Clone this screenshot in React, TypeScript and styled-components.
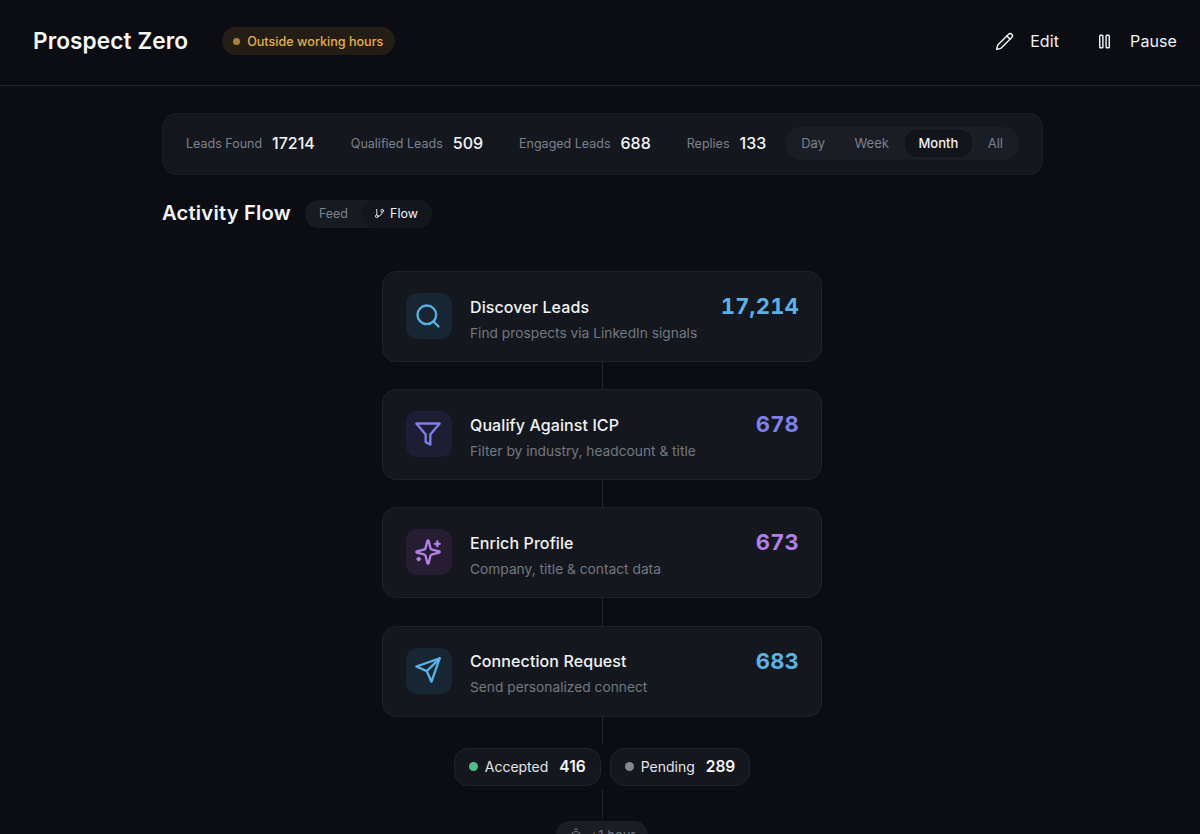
import React from 'react';
import styled, { createGlobalStyle } from 'styled-components';
import { GitBranch, Pencil, Search, Timer } from 'lucide-react';

const DISPLAY = `'Inter', 'Liberation Sans', sans-serif`;

const GlobalStyle = createGlobalStyle`
  html, body {
    margin: 0;
    padding: 0;
    height: 834px;
    overflow: hidden;
    background-color: #0b0d12;
    font-family: 'Inter', 'Liberation Sans', sans-serif;
  }
  * {
    box-sizing: border-box;
  }
`;

const Page = styled.div`
  width: 1200px;
  height: 834px;
  overflow: hidden;
  color: #f4f5f7;
`;

const Header = styled.header`
  display: flex;
  align-items: center;
  justify-content: space-between;
  height: 86px;
  padding: 0 23px 3px 33px;
  border-bottom: 1px solid #20232a;
`;

const HeaderLeft = styled.div`
  display: flex;
  align-items: center;
  gap: 34px;
`;

const Logo = styled.h1`
  margin: -2px 0 0;
  font-family: ${DISPLAY};
  font-size: 22.6px;
  font-weight: 600;
  letter-spacing: 0.1px;
  color: #f6f7f8;
`;

const StatusBadge = styled.div`
  display: flex;
  align-items: center;
  gap: 7px;
  height: 28px;
  padding: 0 12px 0 11px;
  border-radius: 14px;
  background-color: #231d15;
  color: #e3b04f;
  font-size: 12.6px;
  font-weight: 500;
`;

const Dot = styled.span<{ $color: string; $size: number }>`
  width: ${(p) => p.$size}px;
  height: ${(p) => p.$size}px;
  flex: none;
  border-radius: 50%;
  background-color: ${(p) => p.$color};
`;

const HeaderActions = styled.div`
  display: flex;
  align-items: center;
  gap: 36px;
`;

const HeaderButton = styled.button<{ $gap: number }>`
  display: flex;
  align-items: center;
  gap: ${(p) => p.$gap}px;
  padding: 0;
  border: none;
  background: none;
  color: #f1f2f4;
  font-family: inherit;
  font-size: 16px;
  font-weight: 400;
  letter-spacing: 0.1px;
`;

const Main = styled.main`
  width: 881px;
  margin-left: 162px;
  padding-top: 27px;
`;

const StatsBar = styled.section`
  display: flex;
  align-items: center;
  justify-content: space-between;
  height: 62px;
  padding: 0 23px 2px;
  border: 1px solid #1b1e25;
  border-radius: 14px;
  background-color: #14181e;
`;

const Stats = styled.div`
  display: flex;
  align-items: center;
  gap: 36px;
`;

const Stat = styled.div`
  display: flex;
  align-items: center;
  gap: 10px;
`;

const StatLabel = styled.span`
  color: #7d818c;
  font-size: 12.5px;
`;

const StatValue = styled.span`
  font-family: ${DISPLAY};
  font-size: 16px;
  font-weight: 500;
  color: #f4f5f7;
`;

const Segments = styled.div`
  display: flex;
  align-items: center;
  gap: 2.5px;
  height: 33px;
  padding: 0 2.5px;
  border-radius: 16px;
  background-color: #1a1d24;
`;

const Segment = styled.span<{ $active?: boolean }>`
  display: flex;
  align-items: center;
  height: 27px;
  padding: 0 13.5px;
  border-radius: 12px;
  background-color: ${(p) => (p.$active ? '#11141a' : 'transparent')};
  color: ${(p) => (p.$active ? '#f1f2f4' : '#7d818c')};
  font-size: 13px;
  font-weight: ${(p) => (p.$active ? 450 : 400)};
`;

const TitleRow = styled.div`
  display: flex;
  align-items: center;
  gap: 14px;
  margin-top: 25px;
`;

const Title = styled.h2`
  margin: -4px 0 0;
  font-family: ${DISPLAY};
  font-size: 20.2px;
  font-weight: 600;
  letter-spacing: 0.2px;
  color: #f4f5f7;
`;

const ViewSwitch = styled.div`
  display: flex;
  align-items: stretch;
  height: 28px;
  border-radius: 14px;
  background-color: #171a21;
  font-size: 12.5px;
`;

const ViewOption = styled.span<{ $active?: boolean }>`
  display: flex;
  align-items: center;
  gap: 5px;
  padding: 0 14px 2px ${(p) => (p.$active ? 12 : 14)}px;
  border-radius: 14px;
  background-color: ${(p) => (p.$active ? '#13161c' : 'transparent')};
  color: ${(p) => (p.$active ? '#f1f2f4' : '#7d818c')};
`;

const Flow = styled.section`
  display: flex;
  flex-direction: column;
  align-items: center;
  margin-top: 43px;
  padding-right: 1px;
`;

const Card = styled.article`
  display: flex;
  align-items: center;
  width: 440px;
  height: 91px;
  padding: 0 22px 0 23px;
  border: 1px solid #1f2229;
  border-radius: 14px;
  background-color: #14181e;
`;

const IconBox = styled.div<{ $bg: string; $color: string }>`
  display: flex;
  align-items: center;
  justify-content: center;
  width: 46px;
  height: 46px;
  flex: none;
  margin-bottom: 1px;
  padding: 0 2px 1px 0;
  border-radius: 12px;
  background-color: ${(p) => p.$bg};
  color: ${(p) => p.$color};
`;

const CardText = styled.div`
  display: flex;
  flex: 1;
  flex-direction: column;
  gap: 8px;
  margin: 6px 0 0 18px;
`;

const CardTitle = styled.span`
  font-size: 16px;
  font-weight: 450;
  line-height: 19px;
  letter-spacing: 0.1px;
  color: #f1f2f4;
`;

const CardDescription = styled.span`
  font-size: 13.75px;
  line-height: 17px;
  color: #73777f;
`;

const CardValue = styled.span<{ $color: string }>`
  align-self: flex-start;
  margin-top: 21px;
  font-family: ${DISPLAY};
  font-size: 22px;
  font-weight: 700;
  line-height: 26px;
  letter-spacing: 0.2px;
  font-variant-numeric: tabular-nums;
  color: ${(p) => p.$color};
`;

const Connector = styled.div<{ $height: number; $after?: number }>`
  width: 1px;
  height: ${(p) => p.$height}px;
  flex: none;
  margin-bottom: ${(p) => p.$after ?? 0}px;
  background-color: #23262d;
`;

const PillRow = styled.div`
  display: flex;
  gap: 9px;
  margin-bottom: 4px;
`;

const Pill = styled.div`
  display: flex;
  align-items: center;
  height: 38px;
  padding: 0 14px;
  border: 1px solid #1f2229;
  border-radius: 14px;
  background-color: #14181e;
`;

const PillLabel = styled.span`
  margin-left: 7px;
  font-size: 14px;
  color: #e4e5e8;
`;

const PillValue = styled.span`
  margin-left: 11px;
  font-family: ${DISPLAY};
  font-size: 15.5px;
  font-weight: 600;
  color: #f4f5f7;
`;

const DelayBadge = styled.div`
  display: flex;
  align-items: center;
  gap: 7px;
  height: 28px;
  padding: 0 13px;
  border-radius: 14px;
  background-color: #1a1d24;
  color: #73777f;
  font-size: 13px;
`;

const stats = [
  { label: 'Leads Found', value: '17214' },
  { label: 'Qualified Leads', value: '509' },
  { label: 'Engaged Leads', value: '688' },
  { label: 'Replies', value: '133' },
];

const Glyph: React.FC<{ size?: number; width?: number; children: React.ReactNode }> = ({ size = 28, width = 2, children }) => (
  <svg width={size} height={size} viewBox='0 0 24 24' fill='none' stroke='currentColor' strokeWidth={width} strokeLinejoin='round' strokeLinecap='round'>
    {children}
  </svg>
);

const FunnelIcon = () => (
  <Glyph>
    <polygon points='22 3 2 3 10 12.46 10 19 14 21 14 12.46 22 3' />
  </Glyph>
);

const SparkleIcon = () => (
  <Glyph>
    <path d='M9.937 15.5A2 2 0 0 0 8.5 14.063l-6.135-1.582a.5.5 0 0 1 0-.962L8.5 9.936A2 2 0 0 0 9.937 8.5l1.582-6.135a.5.5 0 0 1 .963 0L14.063 8.5A2 2 0 0 0 15.5 9.937l6.135 1.581a.5.5 0 0 1 0 .964L15.5 14.063a2 2 0 0 0-1.437 1.437l-1.582 6.135a.5.5 0 0 1-.963 0z' />
    <path d='M20 3v4' />
    <path d='M22 5h-4' />
    <path d='M4 17v2' />
    <path d='M5 18H3' />
  </Glyph>
);

const SendIcon = () => (
  <Glyph>
    <path d='m22 2-7 20-4-9-9-4Z' />
    <path d='M22 2 11 13' />
  </Glyph>
);

const PauseIcon = () => (
  <Glyph size={19} width={1.8}>
    <rect x='6' y='4' width='4' height='16' rx='1' />
    <rect x='14' y='4' width='4' height='16' rx='1' />
  </Glyph>
);

const steps = [
  {
    title: 'Discover Leads',
    description: 'Find prospects via LinkedIn signals',
    value: '17,214',
    color: '#5bb0e6',
    bg: '#182633',
    icon: <Search size={28} strokeWidth={2} />,
  },
  {
    title: 'Qualify Against ICP',
    description: 'Filter by industry, headcount & title',
    value: '678',
    color: '#7f80e8',
    bg: '#1d1e33',
    icon: <FunnelIcon />,
  },
  {
    title: 'Enrich Profile',
    description: 'Company, title & contact data',
    value: '673',
    color: '#b07fe8',
    bg: '#261d33',
    icon: <SparkleIcon />,
  },
  {
    title: 'Connection Request',
    description: 'Send personalized connect',
    value: '683',
    color: '#5bb0e6',
    bg: '#182633',
    icon: <SendIcon />,
  },
];

const App: React.FC = () => {
  return (
    <Page>
      <GlobalStyle />
      <Header>
        <HeaderLeft>
          <Logo>Prospect Zero</Logo>
          <StatusBadge>
            <Dot $color='#a8823a' $size={7} />
            Outside working hours
          </StatusBadge>
        </HeaderLeft>
        <HeaderActions>
          <HeaderButton $gap={16}>
            <Pencil size={19} strokeWidth={1.8} />
            Edit
          </HeaderButton>
          <HeaderButton $gap={16}>
            <PauseIcon />
            Pause
          </HeaderButton>
        </HeaderActions>
      </Header>
      <Main>
        <StatsBar>
          <Stats>
            {stats.map((stat) => (
              <Stat key={stat.label}>
                <StatLabel>{stat.label}</StatLabel>
                <StatValue>{stat.value}</StatValue>
              </Stat>
            ))}
          </Stats>
          <Segments>
            <Segment>Day</Segment>
            <Segment>Week</Segment>
            <Segment $active>Month</Segment>
            <Segment>All</Segment>
          </Segments>
        </StatsBar>
        <TitleRow>
          <Title>Activity Flow</Title>
          <ViewSwitch>
            <ViewOption>Feed</ViewOption>
            <ViewOption $active>
              <GitBranch size={11} strokeWidth={2} />
              Flow
            </ViewOption>
          </ViewSwitch>
        </TitleRow>
        <Flow>
          {steps.map((step, i) => (
            <React.Fragment key={step.title}>
              <Card>
                <IconBox $bg={step.bg} $color={step.color}>
                  {step.icon}
                </IconBox>
                <CardText>
                  <CardTitle>{step.title}</CardTitle>
                  <CardDescription>{step.description}</CardDescription>
                </CardText>
                <CardValue $color={step.color}>{step.value}</CardValue>
              </Card>
              {i < steps.length - 1 ? <Connector $height={27.2} /> : <Connector $height={27.4} $after={4} />}
            </React.Fragment>
          ))}
          <PillRow>
            <Pill>
              <Dot $color='#4fbd85' $size={9} />
              <PillLabel>Accepted</PillLabel>
              <PillValue>416</PillValue>
            </Pill>
            <Pill>
              <Dot $color='#83858f' $size={9} />
              <PillLabel>Pending</PillLabel>
              <PillValue>289</PillValue>
            </Pill>
          </PillRow>
          <Connector $height={28} $after={3} />
          <DelayBadge>
            <Timer size={14} strokeWidth={2} />
            +1 hour
          </DelayBadge>
        </Flow>
      </Main>
    </Page>
  );
};

export default App;
